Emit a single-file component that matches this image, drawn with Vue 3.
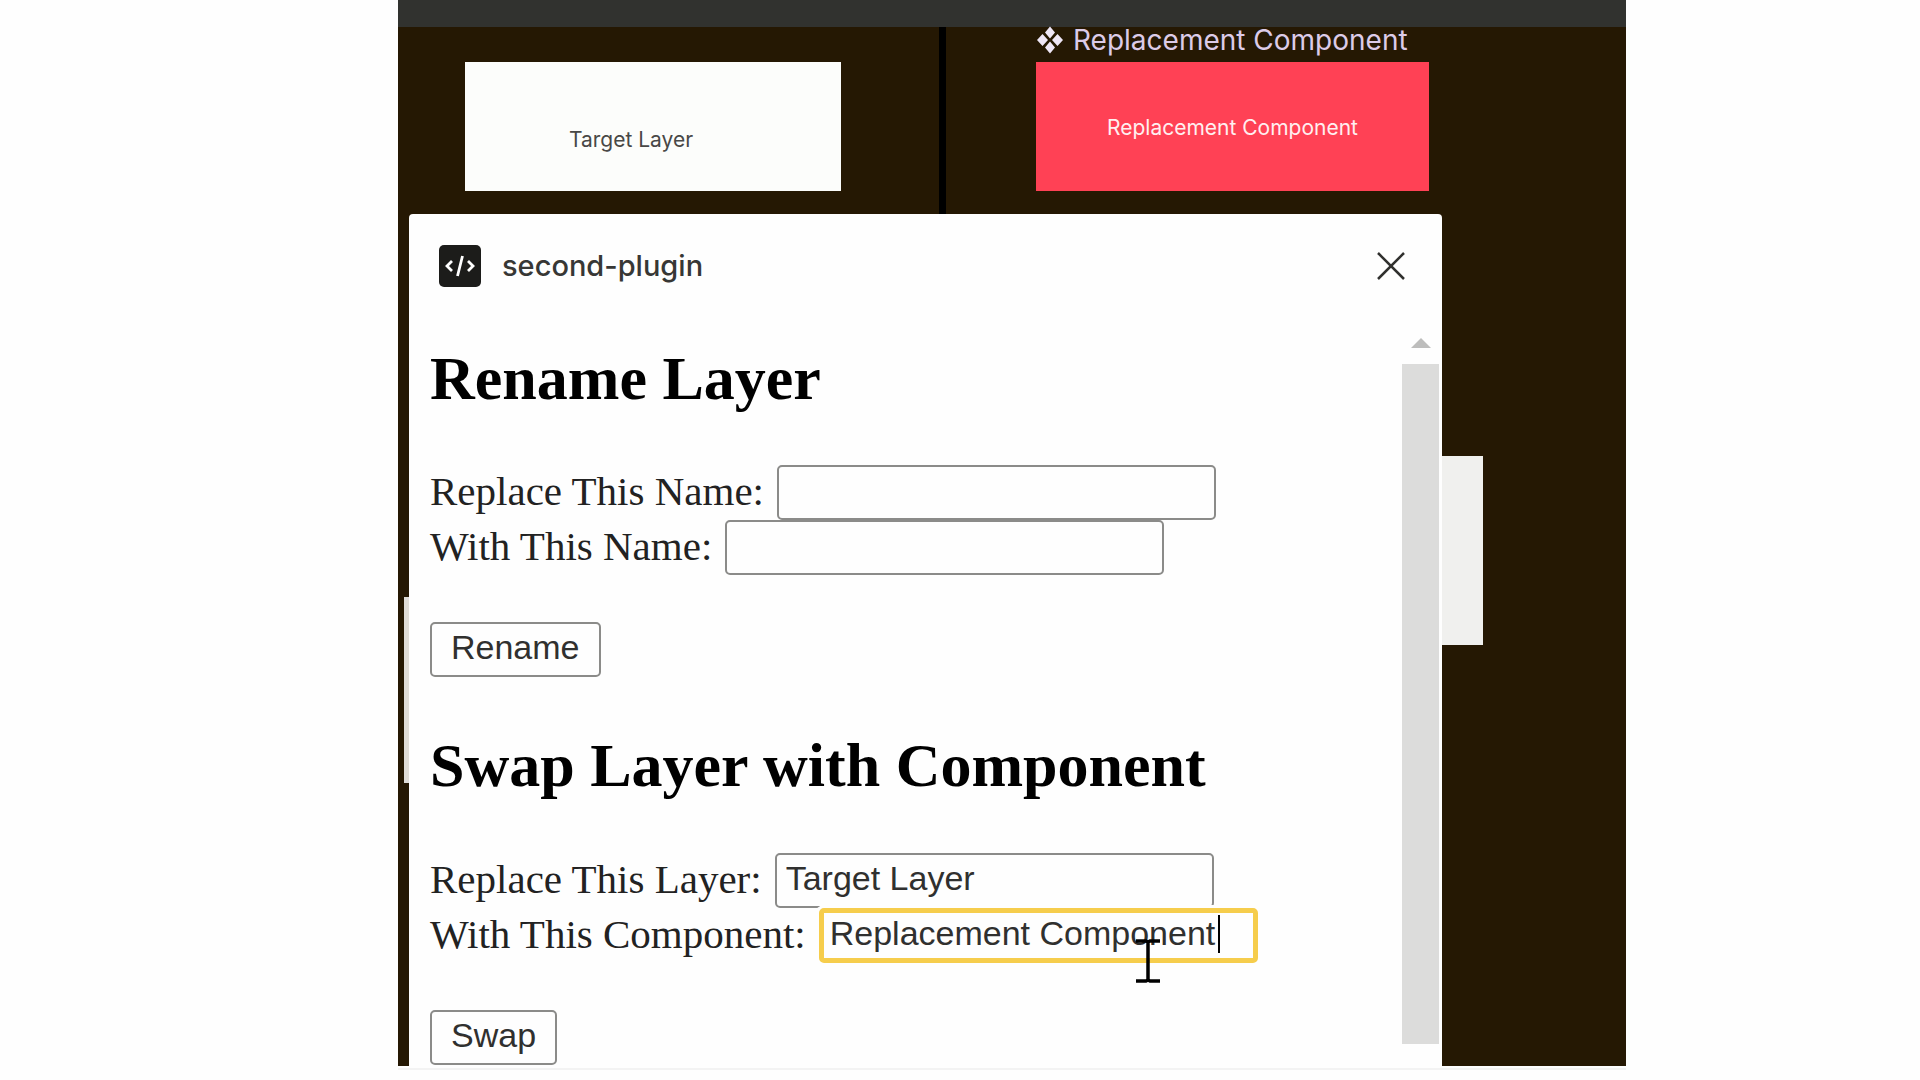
<script setup>
import { ref } from 'vue'

const sections = ref([
  {
    title: 'Rename Layer',
    action: 'Rename',
    fields: [
      { id: 'old-name', label: 'Replace This Name:', value: '' },
      { id: 'new-name', label: 'With This Name:', value: '' },
    ],
  },
  {
    title: 'Swap Layer with Component',
    action: 'Swap',
    fields: [
      { id: 'layer', label: 'Replace This Layer:', value: 'Target Layer' },
      { id: 'component', label: 'With This Component:', value: 'Replacement Component', active: true },
    ],
  },
])
</script>

<template>
  <div class="page">
    <main class="stage">
      <div class="toolbar"></div>
      <div class="canvas">
        <div class="divider"></div>
        <div class="node target"><span>Target Layer</span></div>
        <div class="component-name">
          <svg width="28" height="28" viewBox="0 0 28 28" aria-hidden="true">
            <path d="M14 .5l5 6-5 6-5-6zM14 15.500l5 6-5 6-5-6zM6.500 8l5.500 6-5.500 6L1 14zM21.500 8L27 14l-5.500 6L16 14z" fill="#eee6f6" />
          </svg>
          <span>Replacement Component</span>
        </div>
        <div class="node replacement"><span>Replacement Component</span></div>
        <div class="node edge-right"></div>
        <div class="node edge-left"></div>

        <section class="panel">
          <header class="panel-header">
            <svg class="plugin-icon" width="42" height="42" viewBox="0 0 42 42" aria-hidden="true">
              <rect width="42" height="42" rx="5" fill="#1c1c1a" />
              <path d="M13 16l-5 5 5 5M29 16l5 5-5 5M23.500 11l-5 20" fill="none" stroke="#fff" stroke-width="2.800" />
            </svg>
            <span class="plugin-name">second-plugin</span>
            <button class="close" type="button" aria-label="Close">
              <svg width="30" height="30" viewBox="0 0 30 30" aria-hidden="true">
                <path d="M2 2l26 26M28 2L2 28" fill="none" stroke="#30302e" stroke-width="2.500" />
              </svg>
            </button>
          </header>
          <div class="panel-body">
            <div class="content">
              <form v-for="s in sections" :key="s.title" @submit.prevent>
                <h2>{{ s.title }}</h2>
                <div v-for="f in s.fields" :key="f.id" class="row">
                  <label :for="f.id">{{ f.label }}</label>
                  <div class="field">
                    <input :id="f.id" v-model="f.value" type="text" :class="{ active: f.active }" />
                    <template v-if="f.active">
                      <i class="caret"></i>
                      <svg class="pointer" width="26" height="44" viewBox="0 0 26 44" aria-hidden="true">
                        <path d="M1 2h10l2 1 2-1h10M1 42h10l2-1 2 1h10M13 2v40" fill="none" stroke="#000" stroke-width="3.500" />
                      </svg>
                    </template>
                  </div>
                </div>
                <button class="action" type="submit">{{ s.action }}</button>
              </form>
            </div>
            <div class="scrollbar">
              <svg width="20" height="10" viewBox="0 0 20 10" aria-hidden="true">
                <path d="M10 0l10 10H0z" fill="#bdbdbc" />
              </svg>
              <div class="thumb"></div>
            </div>
          </div>
        </section>
      </div>
      <div class="baseline"></div>
    </main>
  </div>
</template>

<style>
body {
  margin: 0;
  background: #fefefe;
}
</style>

<style scoped>
.page {
  display: grid;
  grid-template-columns: 398fr 1228fr 294fr;
  font-family: Inter, "Liberation Sans", sans-serif;
}
.stage {
  grid-column: 2;
  min-width: 0;
}
.toolbar {
  height: 27px;
  background: #31322f;
}
.canvas {
  position: relative;
  padding: 187px 184px 0 11px;
  background: #251803;
}
.divider {
  position: absolute;
  left: 541px;
  top: 0;
  width: 7px;
  height: 187px;
  background: #000;
}
.node {
  position: absolute;
  display: flex;
  justify-content: center;
  box-sizing: border-box;
}
.target {
  left: 67px;
  top: 35px;
  width: 376px;
  height: 129px;
  padding: 65px 44px 0 0;
  background: #fcfdfb;
  color: #484846;
  font-size: 21px;
  line-height: 26px;
}
.replacement {
  left: 638px;
  top: 35px;
  width: 393px;
  height: 129px;
  padding-top: 53px;
  background: #ff4155;
  color: #ffeff0;
  font-size: 21px;
  line-height: 26px;
}
.component-name {
  position: absolute;
  left: 638px;
  top: -4px;
  display: flex;
  align-items: center;
  gap: 9px;
  color: #dccbe8;
  font-size: 28px;
  line-height: 34px;
  white-space: nowrap;
}
.edge-right {
  right: 143px;
  top: 429px;
  width: 80px;
  height: 189px;
  background: #f0f0ee;
}
.edge-left {
  left: 6px;
  top: 570px;
  width: 80px;
  height: 186px;
  background: #dfddd8;
}
.panel {
  position: relative;
  background: #fefefe;
  border-radius: 4px 4px 0 0;
}
.panel-header {
  display: flex;
  align-items: center;
  box-sizing: border-box;
  height: 102px;
  padding: 2px 36px 0 30px;
}
.plugin-name {
  margin-left: 21px;
  color: #373735;
  font-size: 29px;
  font-weight: 500;
  line-height: 36px;
}
.close {
  display: flex;
  margin-left: auto;
  padding: 0;
  border: 0;
  background: none;
}
.panel-body {
  display: flex;
  padding-right: 3px;
}
.content {
  flex: 1;
  min-width: 0;
  padding: 26px 0 1px 21px;
}
form + form {
  margin-top: 52px;
}
h2 {
  margin: 0 0 51px;
  color: #000;
  font: bold 62px/72px "Liberation Serif", serif;
  white-space: nowrap;
}
form + form h2 {
  margin-bottom: 52px;
}
.row {
  display: flex;
  gap: 13px;
}
label {
  padding-bottom: 2px;
  color: #222;
  font: 41px/53px "Liberation Serif", serif;
  white-space: nowrap;
}
.field {
  position: relative;
  width: 439px;
}
input,
.action {
  box-sizing: border-box;
  height: 55px;
  border: 2px solid #8b8b89;
  border-radius: 5px;
  background: #fefefe;
  color: #30302f;
  font: 34px/38px "Liberation Sans", sans-serif;
}
input {
  display: block;
  width: 100%;
  padding: 1px 9px 5px;
  outline: none;
}
input.active {
  border: 5px solid #f6cd4c;
  box-shadow: 0 0 0 3px #fefefe;
  padding: 0 6px 4px;
}
.caret {
  position: absolute;
  left: 399px;
  top: 7px;
  width: 2px;
  height: 38px;
  background: #000;
}
.pointer {
  position: absolute;
  left: 316px;
  top: 31px;
}
.action {
  display: block;
  margin-top: 47px;
  padding: 0 19px 6px;
}
.scrollbar {
  display: flex;
  flex-direction: column;
  align-items: center;
  width: 37px;
  padding: 22px 0;
}
.thumb {
  flex: 1;
  width: 100%;
  margin-top: 16px;
  background: #dcdcdb;
}
.baseline {
  height: 2px;
  margin-top: 2px;
  background: #f3f3f3;
}
</style>
